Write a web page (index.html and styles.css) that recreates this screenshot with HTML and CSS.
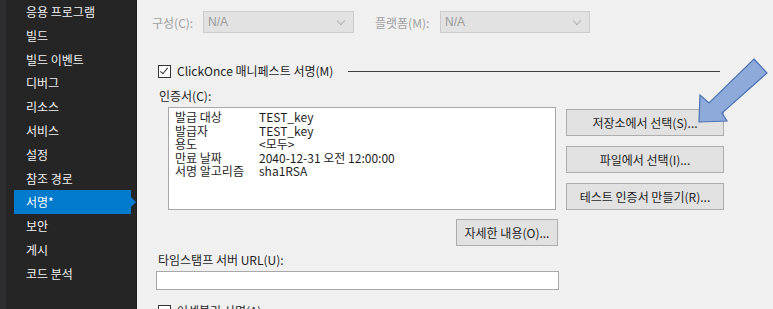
FILE: index.html
```html
<!DOCTYPE html>
<html>
<head>
  <title>서명</title>
  <link rel="stylesheet" href="styles.css">
</head>
<body>

  <nav class="sidebar">
    <ul class="nav-list">
      <li class="nav-item">응용 프로그램</li>
      <li class="nav-item">빌드</li>
      <li class="nav-item">빌드 이벤트</li>
      <li class="nav-item">디버그</li>
      <li class="nav-item">리소스</li>
      <li class="nav-item">서비스</li>
      <li class="nav-item">설정</li>
      <li class="nav-item">참조 경로</li>
      <li class="nav-item active">서명*</li>
      <li class="nav-item">보안</li>
      <li class="nav-item">게시</li>
      <li class="nav-item">코드 분석</li>
    </ul>
  </nav>

  <main class="content">
    <div class="config-row">
      <span class="config-label">구성(C):</span>
      <div class="combo combo-config">N/A<span class="chevron"></span></div>
      <span class="config-label platform-label">플랫폼(M):</span>
      <div class="combo combo-platform">N/A<span class="chevron"></span></div>
    </div>

    <div class="separator"></div>

    <div class="group-title">
      <span class="checkbox checked"></span>
      <span>ClickOnce 매니페스트 서명(M)</span>
      <span class="group-line"></span>
    </div>

    <div class="field-label cert-label">인증서(C):</div>

    <div class="cert-row">
      <div class="cert-box">
        <div class="cert-line"><span class="cert-key">발급 대상</span><span>TEST_key</span></div>
        <div class="cert-line"><span class="cert-key">발급자</span><span>TEST_key</span></div>
        <div class="cert-line"><span class="cert-key">용도</span><span>&lt;모두&gt;</span></div>
        <div class="cert-line"><span class="cert-key">만료 날짜</span><span>2040-12-31 오전 12:00:00</span></div>
        <div class="cert-line"><span class="cert-key">서명 알고리즘</span><span>sha1RSA</span></div>
      </div>
      <div class="cert-buttons">
        <button class="btn">저장소에서 선택(S)...</button>
        <button class="btn">파일에서 선택(I)...</button>
        <button class="btn">테스트 인증서 만들기(R)...</button>
      </div>
    </div>

    <div class="details-row">
      <button class="btn btn-details">자세한 내용(O)...</button>
    </div>

    <div class="field-label stamp-label">타임스탬프 서버 URL(U):</div>
    <input class="url-input" type="text">

    <div class="group-title bottom-check">
      <span class="checkbox"></span>
      <span>어셈블리 서명(A)</span>
    </div>

    <!-- 강조 화살표 -->
    <svg class="pointer-arrow" width="80" height="75" viewBox="690 55 80 75">
      <polygon points="754,59 767,73 722,113 727,121 699,122 700,95 709,103"
               fill="#8eaadb" stroke="#4a72b0" stroke-width="1.2"/>
    </svg>
  </main>

</body>
</html>
```

FILE: styles.css
```css
body {
  margin: 0;
  width: 773px;
  height: 309px;
  overflow: hidden;
  display: flex;
  font-family: "Noto Sans CJK KR", "Noto Sans", sans-serif;
  font-size: 12px;
  color: #1e1e1e;
  background-color: #f0f0f0;
}

.sidebar {
  width: 130px;
  flex-shrink: 0;
  background-color: #252526;
  border-left: 6px solid #2d2d30;
  border-right: 1px solid #1c1c1c;
}

.nav-list {
  list-style: none;
  margin: 0;
  padding: 0;
}

.nav-item {
  position: relative;
  height: 23.8px;
  line-height: 23.8px;
  margin-left: 8px;
  width: 117px;
  padding-left: 12px;
  box-sizing: border-box;
  color: #f1f1f1;
}

.nav-item.active {
  background-color: #007acc;
  color: #fff;
}

.nav-item.active::after {
  content: "";
  position: absolute;
  right: -5px;
  top: 7px;
  border-top: 5px solid transparent;
  border-bottom: 5px solid transparent;
  border-left: 5px solid #007acc;
}

.content {
  position: relative;
  flex: 1;
  display: flex;
  flex-direction: column;
  align-items: flex-start;
}

.config-row {
  display: flex;
  align-items: center;
  margin-top: 11px;
  margin-left: 15px;
  height: 22px;
}

.config-label {
  color: #a0a0a0;
  width: 51px;
}

.platform-label {
  width: 65px;
  margin-left: 21px;
}

.combo {
  position: relative;
  height: 22px;
  line-height: 21px;
  box-sizing: border-box;
  padding-left: 4px;
  background-color: #e2e2e2;
  border: 1px solid #cccccc;
  color: #9a9a9a;
  font-family: "Liberation Sans", sans-serif;
}

.combo-config {
  width: 151px;
}

.combo-platform {
  width: 150px;
}

.chevron {
  position: absolute;
  right: 9px;
  top: 6px;
  width: 5px;
  height: 5px;
  border-right: 1px solid #b0b0b0;
  border-bottom: 1px solid #b0b0b0;
  transform: rotate(45deg);
}

.separator {
  align-self: stretch;
  margin-top: 14px;
  margin-left: 13px;
  height: 2px;
  background-color: #cfcfcf;
}

.group-title {
  display: flex;
  align-items: center;
  margin-top: 17px;
  margin-left: 21px;
  height: 14px;
  line-height: 14px;
}

.checkbox {
  position: relative;
  width: 11px;
  height: 11px;
  border: 1px solid #333;
  background-color: #fff;
  margin-right: 6px;
}

.checkbox.checked::after {
  content: "";
  position: absolute;
  left: 3px;
  top: 0px;
  width: 3px;
  height: 7px;
  border-right: 1.5px solid #333;
  border-bottom: 1.5px solid #333;
  transform: rotate(40deg);
}

.group-line {
  width: 372px;
  height: 1px;
  background-color: #404040;
  margin-left: 15px;
  margin-top: 1px;
}

.field-label {
  height: 14px;
  line-height: 14px;
}

.cert-label {
  margin-top: 11px;
  margin-left: 22px;
}

.cert-row {
  display: flex;
  align-items: flex-start;
  margin-top: 4px;
  margin-left: 31px;
}

.cert-box {
  width: 388px;
  height: 103px;
  box-sizing: border-box;
  background-color: #fff;
  border: 1px solid #a8a8a8;
  padding: 2px 6px;
}

.cert-line {
  display: flex;
  height: 13.5px;
  line-height: 13.5px;
}

.cert-key {
  width: 84px;
}

.cert-buttons {
  display: flex;
  flex-direction: column;
  gap: 10px;
  margin-left: 10px;
  margin-top: 2px;
}

.btn {
  font-family: "Noto Sans CJK KR", "Noto Sans", sans-serif;
  font-size: 12px;
  color: #1e1e1e;
  width: 158px;
  height: 27px;
  padding: 0;
  background-color: #e1e1e1;
  border: 1px solid #adadad;
}

.details-row {
  margin-top: 9px;
  margin-left: 319px;
}

.btn-details {
  width: 102px;
}

.stamp-label {
  margin-top: 7px;
  margin-left: 21px;
}

.url-input {
  margin: 4px 0 0 19px;
  width: 403px;
  height: 21px;
  box-sizing: border-box;
  border: 1px solid #a8a8a8;
  background-color: #fff;
}

.bottom-check {
  margin-top: 14px;
}

.pointer-arrow {
  position: absolute;
  left: 553px;
  top: 55px;
}
```
